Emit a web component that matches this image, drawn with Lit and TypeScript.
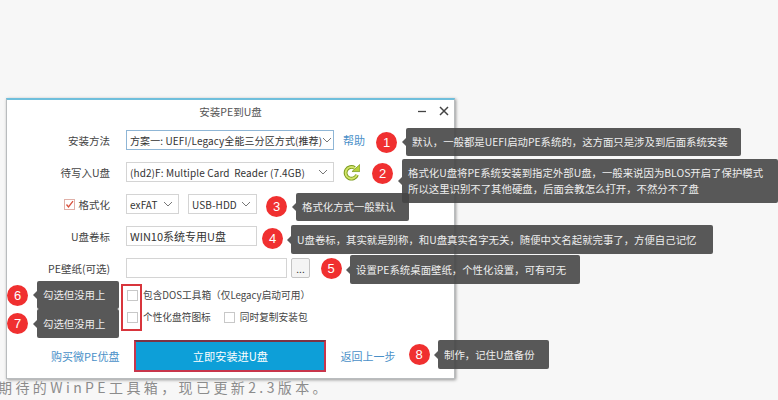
import { LitElement, html, css } from "lit";
import { customElement } from "lit/decorators.js";

const chevron = html`<svg class="chev" width="10" height="6" viewBox="0 0 10 6"><path d="M1 1l4 4 4-4" fill="none" stroke="#777" stroke-width="1"/></svg>`;

const tips = [
  { n: 1, bx: 386.5, by: 142, x: 406, y: 128, w: 335, h: 28, t: ["默认，一般都是UEFI启动PE系统的，这方面只是涉及到后面系统安装"] },
  { n: 2, bx: 382.5, by: 173, x: 402, y: 159, w: 376, h: 44, t: ["格式化U盘将PE系统安装到指定外部U盘，一般来说因为BLOS开启了保护模式", "所以这里识别不了其他硬盘，后面会教怎么打开，不然分不了盘"] },
  { n: 3, bx: 276.5, by: 206.5, x: 296, y: 193, w: 113, h: 28, t: ["格式化方式一般默认"] },
  { n: 4, bx: 272.5, by: 238, x: 291, y: 225, w: 422, h: 29, t: ["U盘卷标，其实就是别称，和U盘真实名字无关，随便中文名起就完事了，方便自己记忆"] },
  { n: 5, bx: 331, by: 268.5, x: 350, y: 255, w: 230, h: 29, t: ["设置PE系统桌面壁纸，个性化设置，可有可无"] },
  { n: 6, bx: 17.5, by: 295, x: 37, y: 281, w: 82, h: 28, t: ["勾选但没用上"] },
  { n: 7, bx: 17.5, by: 323.5, x: 37, y: 309, w: 82, h: 29, t: ["勾选但没用上"] },
  { n: 8, bx: 419, by: 354, x: 438, y: 340, w: 111, h: 29, t: ["制作，记住U盘备份"] },
];

@customElement("app-root")
export class AppRoot extends LitElement {
  static styles = css`
    :host {
      display: block;
      position: relative;
      width: 778px;
      height: 400px;
      overflow: hidden;
      background: #f7f7f7;
      font-family: "Noto Sans CJK SC", "Noto Sans", sans-serif;
      font-size: 10.5px;
      color: #444;
    }
    .page { padding: 98px 0 0 6px; }
    .win {
      box-sizing: border-box;
      width: 449px;
      height: 281px;
      background: #fff;
      border: 1px solid #b9bcbe;
      border-top: 2px solid #6fbfdc;
      box-shadow: 1px 1px 3px rgba(0,0,0,.4);
      display: flex;
      flex-direction: column;
    }
    .title {
      height: 23px;
      display: flex;
      align-items: center;
      justify-content: center;
      position: relative;
      font-size: 10.5px;
      color: #555;
    }
    .ctrls {
      position: absolute;
      right: 5px;
      top: 6px;
      display: flex;
      gap: 12px;
      align-items: center;
    }
    .form {
      display: flex;
      flex-direction: column;
      gap: 12px;
      padding-top: 7px;
    }
    .row {
      display: flex;
      align-items: center;
      height: 20px;
      gap: 9px;
    }
    .lab {
      width: 103px;
      flex: none;
      font-size: 10.5px;
      color: #444;
      margin-right: 7px;
      display: flex;
      justify-content: flex-end;
      align-items: center;
      gap: 4px;
    }
    .f {
      box-sizing: border-box;
      height: 20px;
      border: 1px solid #d4d4d4;
      background: #fff;
      display: flex;
      align-items: center;
      padding: 0 3px;
      font-size: 10px;
      color: #333;
      white-space: nowrap;
      flex: none;
      justify-content: space-between;
      letter-spacing: .1px;
    }
    .active { border-color: #8fb6d6; }
    .w208 { width: 208px; }
    .w53 { width: 53px; }
    .w69 { width: 69px; }
    .w131 { width: 131px; }
    .w161 { width: 161px; }
    .inp { font-size: 11px; letter-spacing: 0; }
    .chev { flex: none; margin-right: 2px; }
    .link { color: #4a90c8; font-size: 11px; white-space: nowrap; }
    .browse {
      box-sizing: border-box;
      width: 19px;
      height: 20px;
      border: 1px solid #c4c4c4;
      border-radius: 2px;
      background: #f4f4f4;
      font-size: 10px;
      color: #333;
      display: flex;
      align-items: center;
      justify-content: center;
      margin-left: -5px;
    }
    .box {
      box-sizing: border-box;
      width: 11px;
      height: 11px;
      border: 1px solid #c8c8c8;
      background: #fff;
      flex: none;
      display: flex;
      align-items: center;
      justify-content: center;
    }
    .tick { border-color: #e0b0a8; }
    .checks {
      display: flex;
      flex-direction: column;
      padding: 6px 0 0 120px;
    }
    .crow {
      height: 22px;
      display: flex;
      align-items: center;
      font-size: 9.7px;
      color: #444;
      gap: 5px;
    }
    .gap { margin-left: 8px; }
    .bottom {
      display: flex;
      align-items: center;
      padding: 12px 0 0 44px;
    }
    .btn {
      box-sizing: border-box;
      width: 192px;
      height: 32px;
      margin: 0 14px 0 15px;
      background: #0d9fd8;
      border: 2px solid #c8354b;
      border-top-color: #7c3344;
      color: #fff;
      font-size: 11.2px;
      display: flex;
      align-items: center;
      justify-content: center;
    }
    .foot {
      margin: -2px 0 0 -8px;
      white-space: nowrap;
      font-size: 14px;
      color: #8c8c8c;
      letter-spacing: 3.4px;
      line-height: 20px;
    }
    .badge {
      position: absolute;
      width: 21px;
      height: 21px;
      margin: -10.5px 0 0 -10.5px;
      border-radius: 50%;
      background: #f03030;
      color: #fff;
      font-size: 13px;
      font-family: "Liberation Sans", sans-serif;
      display: flex;
      align-items: center;
      justify-content: center;
    }
    .tip {
      position: absolute;
      box-sizing: border-box;
      background: rgba(70,70,70,.9);
      border-radius: 2px;
      color: #eee;
      font-size: 10.4px;
      line-height: 16px;
      padding: 0 0 0 6px;
      display: flex;
      flex-direction: column;
      justify-content: center;
      white-space: nowrap;
    }
    .tip::before {
      content: "";
      position: absolute;
      left: -4px;
      top: 50%;
      margin-top: -4px;
      border: 4px solid transparent;
      border-left: 0;
      border-right-color: rgba(70,70,70,.9);
    }
    .redbox {
      position: absolute;
      left: 121px;
      top: 284px;
      width: 21px;
      height: 47px;
      box-sizing: border-box;
      border: 2px solid #d8353c;
    }
  `;

  render() {
    return html`
      <div class="page">
        <div class="win">
          <div class="title">安装PE到U盘
            <div class="ctrls">
              <svg width="10" height="10" viewBox="0 0 10 10"><path d="M1 5.5h8" stroke="#444" stroke-width="1.3"/></svg>
              <svg width="10" height="10" viewBox="0 0 10 10"><path d="M1 1l8 8M9 1l-8 8" stroke="#444" stroke-width="1.5"/></svg>
            </div>
          </div>
          <div class="form">
            <div class="row">
              <div class="lab">安装方法</div>
              <div class="f w208 active">方案一: UEFI/Legacy全能三分区方式(推荐)${chevron}</div>
              <span class="link">帮助</span>
            </div>
            <div class="row">
              <div class="lab">待写入U盘</div>
              <div class="f w208">(hd2)F: Multiple Card&nbsp; Reader (7.4GB)${chevron}</div>
              <svg width="17" height="17" viewBox="0 0 18 18">
                <path d="M14.8 11.4A6.2 6.2 0 1 1 12.4 4.2" fill="none" stroke="#7d9c1e" stroke-width="4"/>
                <path d="M14.8 11.4A6.2 6.2 0 1 1 12.4 4.2" fill="none" stroke="#d2e46a" stroke-width="2"/>
                <path d="M9.5 8h8.3V.6z" fill="#b6d23c" stroke="#7d9c1e" stroke-width=".8"/>
              </svg>
            </div>
            <div class="row">
              <div class="lab">
                <span class="box tick">
                  <svg width="9" height="9" viewBox="0 0 9 9"><path d="M1.5 4.5l2 2.4L8 1.2" fill="none" stroke="#d8503c" stroke-width="1.3"/></svg>
                </span>格式化
              </div>
              <div class="f w53">exFAT${chevron}</div>
              <div class="f w69">USB-HDD${chevron}</div>
            </div>
            <div class="row">
              <div class="lab">U盘卷标</div>
              <div class="f w131 inp">WIN10系统专用U盘</div>
            </div>
            <div class="row">
              <div class="lab">PE壁纸(可选)</div>
              <div class="f w161"></div>
              <div class="browse">...</div>
            </div>
          </div>
          <div class="checks">
            <div class="crow"><span class="box"></span>包含DOS工具箱（仅Legacy启动可用）</div>
            <div class="crow"><span class="box"></span>个性化盘符图标<span class="box gap"></span>同时复制安装包</div>
          </div>
          <div class="bottom">
            <span class="link">购买微PE优盘</span>
            <div class="btn">立即安装进U盘</div>
            <span class="link">返回上一步</span>
          </div>
        </div>
        <div class="foot">期待的WinPE工具箱，现已更新2.3版本。</div>
      </div>
      <div class="redbox"></div>
      ${tips.map(
        (t) => html`
          <div class="badge" style="left:${t.bx}px;top:${t.by}px">${t.n}</div>
          <div class="tip" style="left:${t.x}px;top:${t.y}px;width:${t.w}px;height:${t.h}px">
            ${t.t.map((l) => html`<div>${l}</div>`)}
          </div>
        `
      )}
    `;
  }
}
